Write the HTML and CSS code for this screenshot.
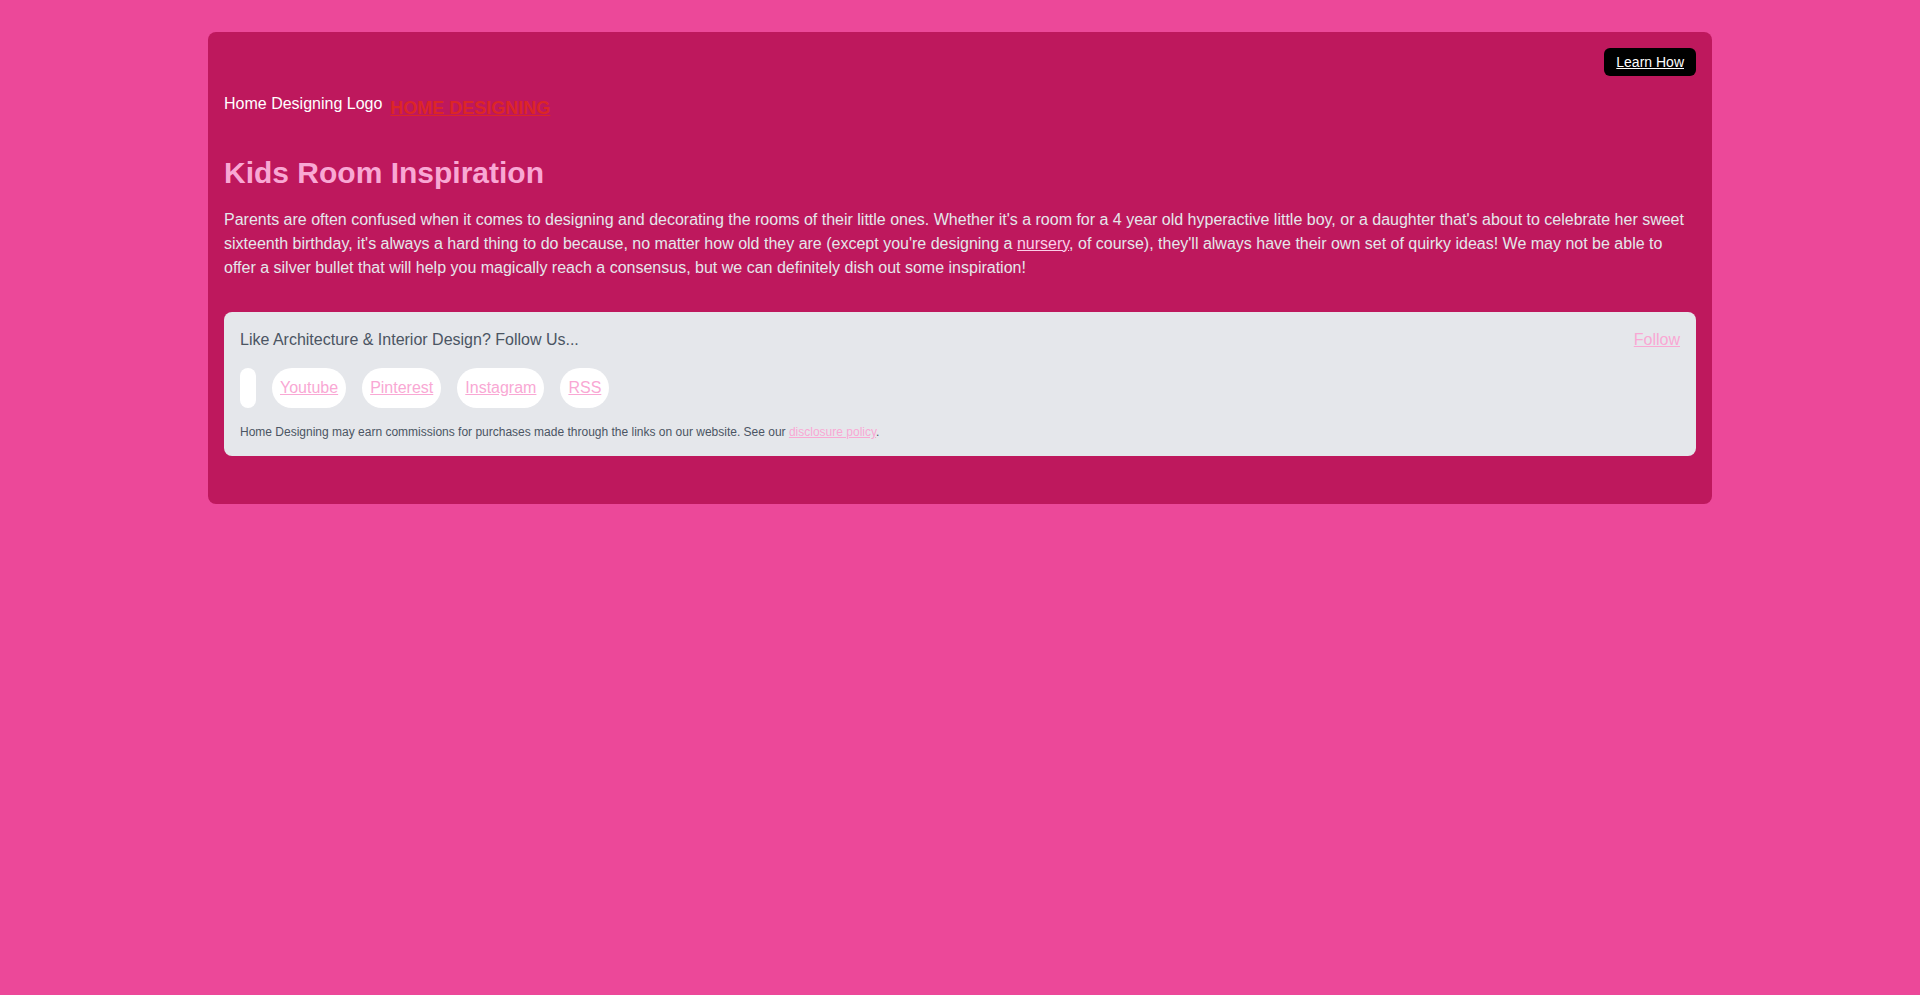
FILE: index.html
```html
<!DOCTYPE html>
<html lang="en">
<head>
<meta charset="utf-8">
<title>Kids Room Inspiration</title>
<link rel="stylesheet" href="styles.css">
</head>
<body>
<div class="card">
  <div class="top-bar">
    <a class="learn-btn" href="#">Learn How</a>
  </div>
  <div class="logo-row">
    <span class="logo-alt">Home Designing Logo</span>
    <a class="brand" href="#">HOME DESIGNING</a>
  </div>
  <h1 class="title">Kids Room Inspiration</h1>
  <p class="intro">Parents are often confused when it comes to designing and decorating the rooms of their little ones. Whether it's a room for a 4 year old hyperactive little boy, or a daughter that's about to celebrate her sweet sixteenth birthday, it's always a hard thing to do because, no matter how old they are (except you're designing a <a class="intro-link" href="#">nursery</a>, of course), they'll always have their own set of quirky ideas! We may not be able to offer a silver bullet that will help you magically reach a consensus, but we can definitely dish out some inspiration!</p>
  <div class="follow-panel">
    <div class="follow-head">
      <span class="follow-title">Like Architecture &amp; Interior Design? Follow Us...</span>
      <a class="pink-link" href="#">Follow</a>
    </div>
    <div class="pills">
      <span class="pill"></span>
      <span class="pill"><a class="pink-link" href="#">Youtube</a></span>
      <span class="pill"><a class="pink-link" href="#">Pinterest</a></span>
      <span class="pill"><a class="pink-link" href="#">Instagram</a></span>
      <span class="pill"><a class="pink-link" href="#">RSS</a></span>
    </div>
    <p class="disclaimer">Home Designing may earn commissions for purchases made through the links on our website. See our <a class="pink-link" href="#">disclosure policy</a>.</p>
  </div>
</div>
</body>
</html>
```

FILE: styles.css
```css
* { box-sizing: border-box; }

html, body {
  margin: 0;
  padding: 0;
  background: #ec4899;
  font-family: "Liberation Sans", Arial, Helvetica, sans-serif;
}

body {
  padding-top: 32px;
}

.card {
  width: 1504px;
  margin: 0 auto;
  background: #be185d;
  border-radius: 8px;
  padding: 16px 16px 48px;
}

.top-bar {
  display: flex;
  justify-content: flex-end;
}

.learn-btn {
  display: block;
  background: #000;
  color: #fff;
  font-size: 14px;
  line-height: 20px;
  padding: 4px 12px;
  border-radius: 6px;
  text-decoration: underline;
}

.logo-row {
  display: flex;
  align-items: flex-start;
  gap: 8px;
  margin-top: 18px;
  height: 24px;
}

.logo-alt {
  color: #fff;
  font-size: 16px;
  line-height: 20px;
}

.brand {
  color: #dc2626;
  font-size: 18px;
  font-weight: 700;
  line-height: 20px;
  margin-top: 4px;
  text-decoration: underline;
}

.title {
  margin: 37px 0 0;
  color: #f9a8d4;
  font-size: 30px;
  line-height: 36px;
  font-weight: 700;
}

.intro {
  margin: 17px 0 0;
  color: #e5e7eb;
  font-size: 16px;
  line-height: 24px;
}

.intro-link {
  color: #fbcfe8;
  text-decoration: underline;
}

.follow-panel {
  margin-top: 32px;
  background: #e5e7eb;
  border-radius: 8px;
  padding: 16px;
}

.follow-head {
  display: flex;
  justify-content: space-between;
  align-items: center;
  font-size: 16px;
  line-height: 24px;
}

.follow-title {
  color: #4b5563;
}

.pink-link {
  color: #f9a8d4;
  text-decoration: underline;
}

.pills {
  display: flex;
  gap: 16px;
  margin-top: 16px;
}

.pill {
  display: block;
  min-width: 16px;
  height: 40px;
  background: #fff;
  border-radius: 9999px;
  padding: 8px;
  font-size: 16px;
  line-height: 24px;
}

.disclaimer {
  margin: 16px 0 0;
  color: #4b5563;
  font-size: 12px;
  line-height: 16px;
}
```
